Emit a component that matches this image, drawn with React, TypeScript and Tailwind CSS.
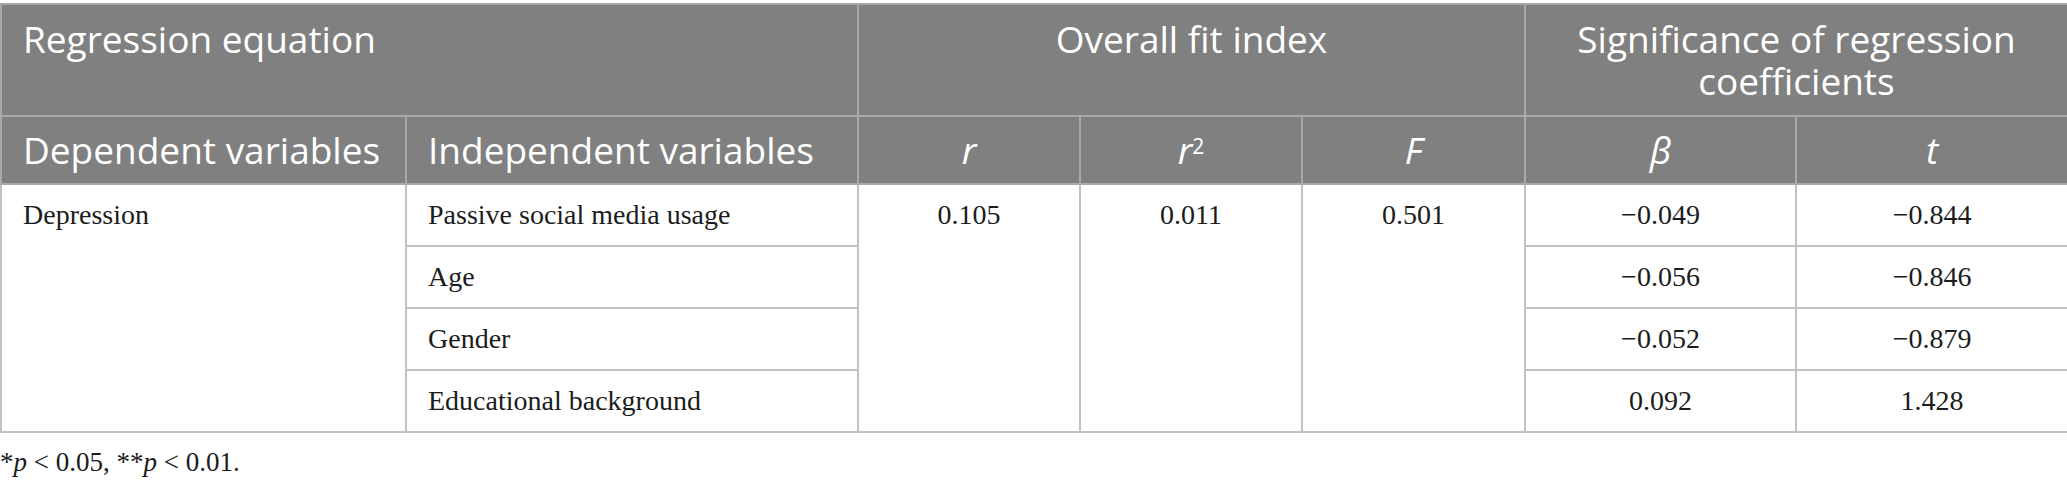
import React from 'react';

interface Row {
  name: string;
  beta: string;
  t: string;
}

const rows: Row[] = [
  { name: 'Passive social media usage', beta: '−0.049', t: '−0.844' },
  { name: 'Age', beta: '−0.056', t: '−0.846' },
  { name: 'Gender', beta: '−0.052', t: '−0.879' },
  { name: 'Educational background', beta: '0.092', t: '1.428' },
];

const th = 'border-2 border-[#a9a9a9] px-[21px] font-normal text-[37px] leading-[42px] align-top';
const td = 'border-2 border-[#c2c2c2] px-[21px] py-[12px] text-[28px] leading-[36px] align-top';

const App: React.FC = () => {
  return (
    <div className="w-[2067px] bg-white pt-[3px]">
      <table className="w-full table-fixed border-collapse">
        <colgroup>
          <col className="w-[405px]" />
          <col className="w-[452px]" />
          <col className="w-[222px]" />
          <col className="w-[222px]" />
          <col className="w-[223px]" />
          <col className="w-[271px]" />
          <col className="w-[272px]" />
        </colgroup>
        <thead className="bg-[#808080] text-white font-['Open_Sans',sans-serif]">
          <tr>
            <th colSpan={2} className={`${th} py-[13px] text-left`}>Regression equation</th>
            <th colSpan={3} className={`${th} py-[13px] text-center`}>Overall fit index</th>
            <th colSpan={2} className={`${th} py-[13px] text-center`}>Significance of regression coefficients</th>
          </tr>
          <tr>
            <th className={`${th} py-[12px] text-left`}>Dependent variables</th>
            <th className={`${th} py-[12px] text-left`}>Independent variables</th>
            <th className={`${th} py-[12px] text-center italic`}>r</th>
            <th className={`${th} py-[12px] text-center`}>
              <span className="italic">r</span>
              <sup className="text-[21px] not-italic">2</sup>
            </th>
            <th className={`${th} py-[12px] text-center italic`}>F</th>
            <th className={`${th} py-[12px] text-center italic`}>β</th>
            <th className={`${th} py-[12px] text-center italic`}>t</th>
          </tr>
        </thead>
        <tbody className="text-[#1c1c1c] font-['Liberation_Serif',serif]">
          {rows.map((row, i) => (
            <tr key={row.name}>
              {i === 0 && (
                <td rowSpan={4} className={`${td} text-left`}>Depression</td>
              )}
              <td className={`${td} text-left`}>{row.name}</td>
              {i === 0 && (
                <>
                  <td rowSpan={4} className={`${td} text-center`}>0.105</td>
                  <td rowSpan={4} className={`${td} text-center`}>0.011</td>
                  <td rowSpan={4} className={`${td} text-center`}>0.501</td>
                </>
              )}
              <td className={`${td} text-center`}>{row.beta}</td>
              <td className={`${td} text-center`}>{row.t}</td>
            </tr>
          ))}
        </tbody>
      </table>
      <p className="mt-[11px] text-[27px] leading-[36px] text-[#1c1c1c] font-['Liberation_Serif',serif]">
        *<span className="italic">p</span> &lt; 0.05, **<span className="italic">p</span> &lt; 0.01.
      </p>
    </div>
  );
};

export default App;
